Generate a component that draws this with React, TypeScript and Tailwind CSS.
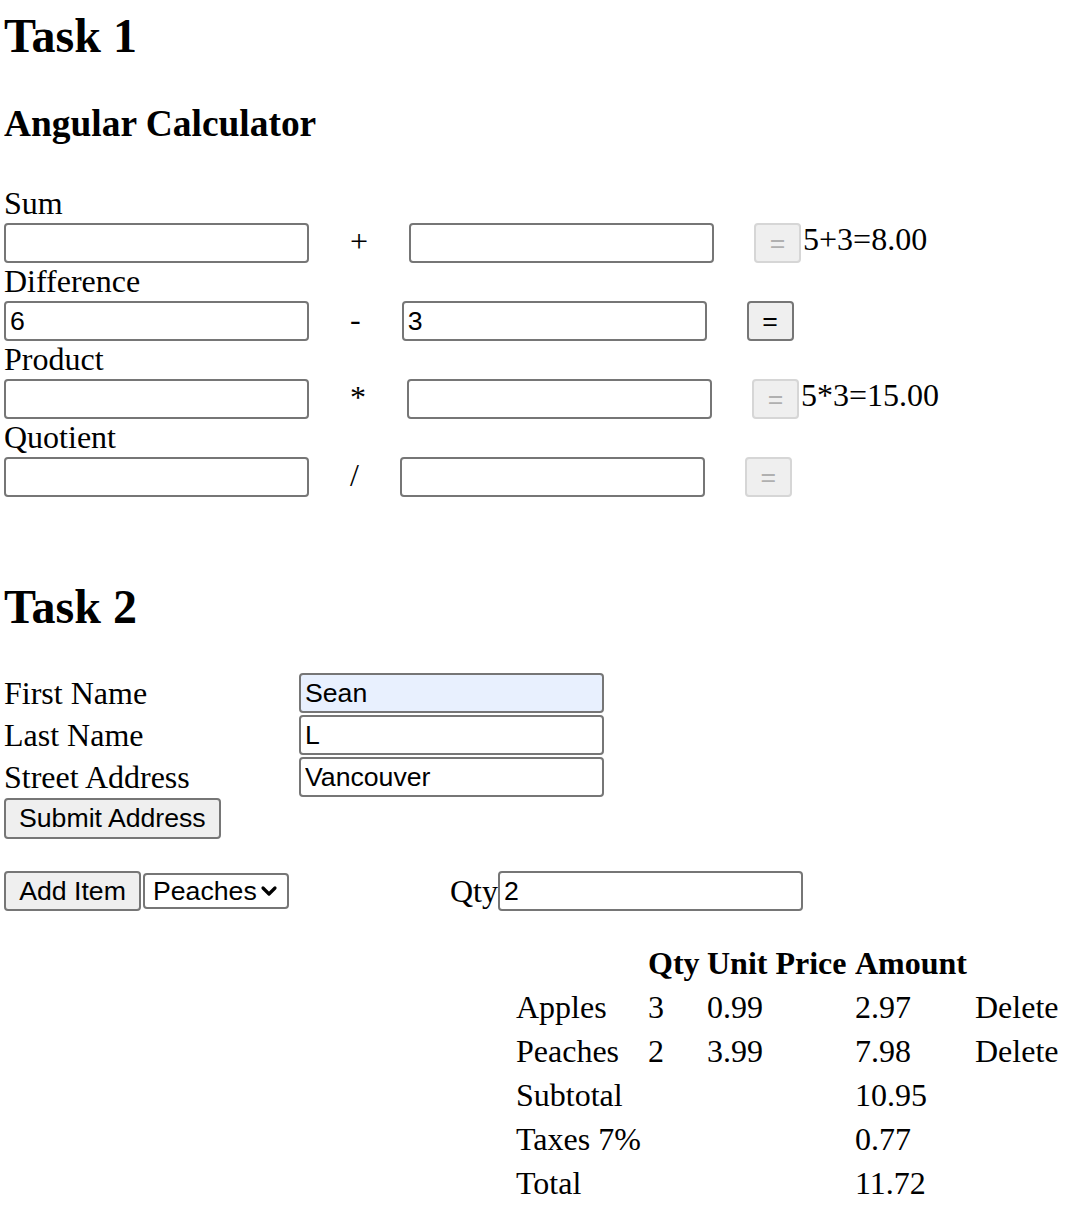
import React from "react";

const calcRows = [
    {label: "Sum", op: "+", a: "", b: "", disabled: true, result: "5+3=8.00"},
    {label: "Difference", op: "-", a: "6", b: "3", disabled: false, result: ""},
    {label: "Product", op: "*", a: "", b: "", disabled: true, result: "5*3=15.00"},
    {label: "Quotient", op: "/", a: "", b: "", disabled: true, result: ""},
];

const addressRows = [
    {label: "First Name", value: "Sean", filled: true},
    {label: "Last Name", value: "L", filled: false},
    {label: "Street Address", value: "Vancouver", filled: false},
];

const items = [
    {name: "Apples", qty: "3", price: "0.99", amount: "2.97"},
    {name: "Peaches", qty: "2", price: "3.99", amount: "7.98"},
];

function Field({value = "", filled = false}: { value?: string; filled?: boolean }) {
    return (
        <input
            defaultValue={value}
            className={`h-[40px] w-[305px] shrink-0 rounded-[4px] border-2 border-[#767676] px-[4px] font-['Liberation_Sans',Arial,sans-serif] text-[26.67px] text-black outline-none ${filled ? "bg-[#e8f0fe]" : "bg-white"}`}
        />
    );
}

function EqButton({disabled}: { disabled: boolean }) {
    return disabled ? (
        <button disabled
                className="ml-[40px] h-[40px] w-[47px] shrink-0 rounded-[4px] border-2 border-[#d6d6d6] bg-[#efefef] font-['Liberation_Sans',Arial,sans-serif] text-[26.67px] leading-none text-[#b0b0b0]">=</button>
    ) : (
        <button
            className="ml-[40px] h-[40px] w-[47px] shrink-0 rounded-[4px] border-2 border-[#767676] bg-[#efefef] font-['Liberation_Sans',Arial,sans-serif] text-[26.67px] leading-none text-black">=</button>
    );
}

export default function App() {
    return (
        <div className="min-h-[1226px] bg-white pl-[4px] font-['Liberation_Serif','Times_New_Roman',serif] text-[32px] text-black">
            <h1 className="pt-[8px] text-[48px] font-bold leading-[56px]">Task 1</h1>
            <h3 className="mt-[38px] text-[37.44px] font-bold leading-[44px]">Angular Calculator</h3>

            <div className="mt-[39px]">
                {calcRows.map((r) => (
                    <div key={r.label}>
                        <div className="h-[38px] leading-[36px]">{r.label}</div>
                        <div className="flex h-[40px] items-center">
                            <Field value={r.a}/>
                            <span className="mx-[41px] -mt-[4px] leading-none">{r.op}</span>
                            <Field value={r.b}/>
                            <EqButton disabled={r.disabled}/>
                            <span className="ml-[2px] -mt-[7px] whitespace-nowrap leading-[37px]">{r.result}</span>
                        </div>
                    </div>
                ))}
            </div>

            <h1 className="mt-[82px] text-[48px] font-bold leading-[56px]">Task 2</h1>

            <div className="mt-[38px] flex flex-col gap-[2px]">
                {addressRows.map((r) => (
                    <div key={r.label} className="flex h-[40px] items-center">
                        <span className="w-[295px] shrink-0 leading-[37px]">{r.label}</span>
                        <Field value={r.value} filled={r.filled}/>
                    </div>
                ))}
            </div>
            <button
                className="mt-[1px] block h-[41px] rounded-[4px] border-2 border-[#767676] bg-[#efefef] px-[13px] font-['Liberation_Sans',Arial,sans-serif] text-[26.67px] leading-none text-black">
                Submit Address
            </button>

            <div className="mt-[32px] flex h-[40px] items-center">
                <button
                    className="h-[40px] w-[137px] shrink-0 rounded-[4px] border-2 border-[#767676] bg-[#efefef] font-['Liberation_Sans',Arial,sans-serif] text-[26.67px] leading-none text-black">
                    Add Item
                </button>
                <div
                    className="ml-[2px] flex h-[36px] w-[146px] shrink-0 items-center rounded-[4px] border-2 border-[#767676] bg-white pl-[8px] font-['Liberation_Sans',Arial,sans-serif] text-[26.67px] leading-none">
                    <span>Peaches</span>
                    <svg width="18" height="12" viewBox="0 0 18 12" className="ml-[3px]">
                        <path d="M3 3 L9 9 L15 3" fill="none" stroke="#000" strokeWidth="3.2"
                              strokeLinecap="round" strokeLinejoin="round"/>
                    </svg>
                </div>
                <span className="ml-[161px] leading-[37px]">Qty</span>
                <Field value="2"/>
            </div>

            <div className="mt-[30px] ml-[512px] grid grid-cols-[132px_59px_148px_120px_auto] leading-[44px]">
                <span/>
                <span className="font-bold">Qty</span>
                <span className="font-bold">Unit Price</span>
                <span className="font-bold">Amount</span>
                <span/>
                {items.map((it) => (
                    <React.Fragment key={it.name}>
                        <span>{it.name}</span>
                        <span>{it.qty}</span>
                        <span>{it.price}</span>
                        <span>{it.amount}</span>
                        <span>Delete</span>
                    </React.Fragment>
                ))}
                <span>Subtotal</span>
                <span/>
                <span/>
                <span>10.95</span>
                <span/>
                <span className="whitespace-nowrap">Taxes 7%</span>
                <span/>
                <span/>
                <span>0.77</span>
                <span/>
                <span>Total</span>
                <span/>
                <span/>
                <span>11.72</span>
                <span/>
            </div>
        </div>
    );
}
